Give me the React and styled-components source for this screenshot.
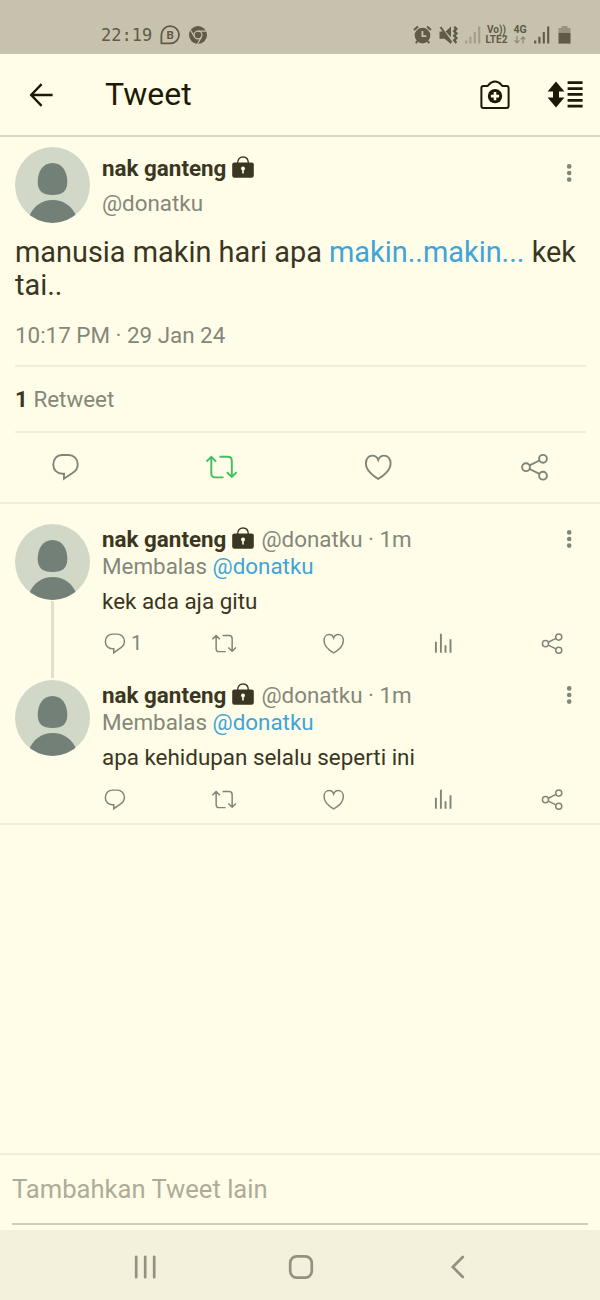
import React from "react";
import styled, { createGlobalStyle, ThemeProvider } from "styled-components";

const theme = {
  colors: {
    page: "#fffde8",
    status: "#c6c2ae",
    statusInk: "#5f5b45",
    header: "#1c1a06",
    text: "#3a3622",
    muted: "#84877a",
    icon: "#7f8577",
    link: "#40a4d9",
    green: "#41bd63",
    line: "#f0eedb",
    navBar: "#f3f0dc",
    navInk: "#959181",
  },
};

const replies = [
  { id: 1, text: "kek ada aja gitu", count: 1, thread: true },
  { id: 2, text: "apa kehidupan selalu seperti ini" },
];

const Avatar = () => (
  <AvatarSvg viewBox="0 0 75 76">
    <clipPath id="round">
      <ellipse cx="37.5" cy="38" rx="37.5" ry="38" />
    </clipPath>
    <g clipPath="url(#round)">
      <rect width="75" height="76" fill="#d1d8c7" />
      <path
        d="M37.5 16C47 16 52.3 24.5 52.3 35C52.3 44 47.5 48 37.5 48S22.7 44 22.7 35C22.7 24.5 28 16 37.5 16Z"
        fill="#738078"
      />
      <path d="M14 70C18 59 27 53 37.7 53S57.5 59 61.5 70V76H14Z" fill="#738078" />
    </g>
  </AvatarSvg>
);

const Lock = () => (
  <LockSvg viewBox="0 0 22 22">
    <path d="M5.6 7.5C5.6 3 8 1 11 1s5.4 2 5.4 6.5" fill="none" stroke="currentColor" strokeWidth="1.4" />
    <rect x="0.2" y="6.4" width="21.6" height="15.4" rx="2.2" fill="currentColor" />
    <circle cx="11" cy="12.6" r="2" fill="#fffde8" />
    <path d="M10.2 13h1.6v4.4h-1.6z" fill="#fffde8" />
  </LockSvg>
);

const More = () => (
  <MoreSvg viewBox="0 0 6 20">
    <circle cx="3.2" cy="3.4" r="2.3" />
    <circle cx="3.2" cy="10" r="2.3" />
    <circle cx="3.2" cy="16.6" r="2.3" />
  </MoreSvg>
);

const Comment = () => (
  <ActionSvg viewBox="-1 -1 32 32">
    <path d="M12.3 3h6.2c5.3 0 9.2 4 9.2 9.2 0 3.6-1.8 6.6-4.9 8.5L14 26.8V21.7H12.5C7 21.7 3.3 17.9 3.3 12.4 3.3 7 7 3 12.3 3z" />
  </ActionSvg>
);

const Retweet = () => (
  <ActionSvg viewBox="0.5 -0.4 32 32">
    <path d="M1 10.2 5.8 5.4l4.8 4.8M5.8 5.8v16.4c0 2.6 1.2 3.8 3.8 3.8H18M14 5.4h8.2c2.8 0 4.1 1.3 4.1 4.1v16M21.4 20.8l4.9 4.8 4.8-4.8" />
  </ActionSvg>
);

const Heart = () => (
  <ActionSvg viewBox="-1 -1 32 32">
    <path d="M15.2 26.9C10.8 24.5 2.9 18.6 2.9 11.2 2.9 6.6 5.9 3.6 9.4 3.6c2.6 0 4.8 1.6 5.8 4.4 1-2.8 3.2-4.4 5.8-4.4 3.6 0 6.6 3 6.6 7.6 0 7.4-7.9 13.3-12.4 15.7z" />
  </ActionSvg>
);

const Share = () => (
  <ActionSvg viewBox="-1 -1 32 32">
    <circle cx="6" cy="15.2" r="3.9" />
    <circle cx="23" cy="6.8" r="3.9" />
    <circle cx="23" cy="23.7" r="3.9" />
    <path d="m9.6 13.4 9.8-4.9M9.6 17l9.8 4.9" />
  </ActionSvg>
);

const Stats = () => (
  <ActionSvg viewBox="0.3 0.3 25 25">
    <path d="M5.2 22V11M10.2 22V3M14.8 22v-7.5M19.8 22V8.5" />
  </ActionSvg>
);

const Signal = ({ faint }) => (
  <StatusIcon viewBox="0 0 16 20" $w={16} $faint={faint}>
    <path d="M1.2 18.4v-3M5.4 18.4v-6.6M9.8 18.4V7M14.2 18.4V1.6" fill="none" stroke="currentColor" strokeWidth="2.1" />
  </StatusIcon>
);

const StatusBar = () => (
  <Status>
    <Clock>22:19</Clock>
    <StatusIcon viewBox="0 0 20 20" $w={20} $gap={8}>
      <path d="M1.4 18.4V10a8.8 8.6 0 1 1 8.8 8.4z" fill="none" stroke="currentColor" strokeWidth="1.8" />
      <text x="10.2" y="14" textAnchor="middle" fontSize="11.5" fontWeight="700" fontFamily="Roboto, sans-serif" fill="currentColor">
        B
      </text>
    </StatusIcon>
    <StatusIcon viewBox="0 0 20 20" $w={20} $gap={8}>
      <circle cx="10" cy="10" r="9" fill="currentColor" />
      <circle cx="10" cy="10" r="3.9" fill="none" stroke="#c6c2ae" strokeWidth="1.2" />
      <path d="M10 6.1h8M6.6 11.9 2.6 5.2M13.4 11.9 9.5 19" stroke="#c6c2ae" strokeWidth="1.2" />
    </StatusIcon>
    <StatusRight>
      <StatusIcon viewBox="0 0 19 20" $w={19}>
        <circle cx="9.5" cy="10.6" r="7.8" fill="currentColor" />
        <path d="m1 5 4-3.6M18 5l-4-3.6M4.4 16.2l-1.6 2M14.6 16.2l1.6 2" stroke="currentColor" strokeWidth="2" />
        <path d="M9.4 6v5.2h4" fill="none" stroke="#c6c2ae" strokeWidth="1.8" />
      </StatusIcon>
      <StatusIcon viewBox="0 0 19 20" $w={19} $gap={7}>
        <path d="M.5 6.5h3.5l8 9V19L5.5 13.8H.5zM6.6 6.6 12 1.6v10.6z" fill="currentColor" />
        <path d="M1.5 2 12.5 17.5" stroke="currentColor" strokeWidth="2" />
        <path d="m15.2 1.8 2.2 2-2.2 2.4 2.2 2.2-2.2 2.4 2.2 2.2-2.2 2.4 2.2 2.6" fill="none" stroke="currentColor" strokeWidth="2.4" />
      </StatusIcon>
      <Spacer $w={7} />
      <Signal faint />
      <Carrier>
        <span>Vo))</span>
        <span>LTE2</span>
      </Carrier>
      <Network>
        <span>4G</span>
        <svg width="12" height="8" viewBox="0 0 12 8">
          <path d="M3 0v6.5M.6 4.4 3 6.8l2.4-2.4M9 7.5V1M6.6 3.4 9 1l2.4 2.4" fill="none" stroke="#8f8b77" strokeWidth="1.3" />
        </svg>
      </Network>
      <Spacer $w={7} />
      <Signal />
      <StatusIcon viewBox="0 0 13 20" $w={13} $gap={8}>
        <path d="M3.5 1h6v2H12.5V9H.5V3h3z" fill="#97937f" />
        <path d="M.5 8h12v10.6H.5z" fill="currentColor" />
      </StatusIcon>
    </StatusRight>
  </Status>
);

const Reply = ({ text, count, thread }) => (
  <ReplyRow>
    <AvatarColumn>
      <Avatar />
      {thread && <ThreadLine />}
    </AvatarColumn>
    <ReplyBody>
      <ReplyHead>
        <Name>nak ganteng</Name>
        <Lock />
        <Muted>@donatku · 1m</Muted>
        <More />
      </ReplyHead>
      <Replying>
        Membalas <Link>@donatku</Link>
      </Replying>
      <ReplyText>{text}</ReplyText>
      <ReplyActions>
        <Action>
          <Comment />
          {count}
        </Action>
        <Action>
          <Retweet />
        </Action>
        <Action>
          <Heart />
        </Action>
        <Action>
          <Stats />
        </Action>
        <Action>
          <Share />
        </Action>
      </ReplyActions>
    </ReplyBody>
  </ReplyRow>
);

const App = () => {
  return (
    <ThemeProvider theme={theme}>
      <GlobalStyle />
      <Screen>
        <StatusBar />
        <Header>
          <BackSvg viewBox="0 0 24 24">
            <path d="M12.6 1.2 2.2 12l10.4 10.8M2.2 12h21.4" />
          </BackSvg>
          <Title>Tweet</Title>
          <CameraSvg viewBox="0 0.5 30 30">
            <path d="M3.4 6.6H7.2C8.6 6.4 9.6 2 15 2s6.4 4.4 7.8 4.6h3.8c1.4 0 2 .7 2 2v18c0 1.4-.6 2-2 2H3.4c-1.4 0-2-.6-2-2V8.6c0-1.3.6-2 2-2z" fill="none" stroke="currentColor" strokeWidth="2" />
            <circle cx="15" cy="16.6" r="7.2" fill="currentColor" />
            <path d="M15 12.5v8.2M10.9 16.6h8.2" stroke="#fffde8" strokeWidth="2.6" />
          </CameraSvg>
          <SortSvg viewBox="0 0 36 27">
            <path d="m9 .4 8.4 10H12v6.2h5.4L9 26.4.6 16.6H6v-6.2H.6z" fill="currentColor" />
            <path d="M20.6 1.7h15M20.6 7.6h15M20.6 13.4h15M20.6 19.3h15M20.6 25.2h15" stroke="currentColor" strokeWidth="2.8" />
          </SortSvg>
        </Header>
        <Tweet>
          <Author>
            <Avatar />
            <AuthorInfo>
              <NameRow>
                <Name>nak ganteng</Name>
                <Lock />
                <More />
              </NameRow>
              <Muted>@donatku</Muted>
            </AuthorInfo>
          </Author>
          <TweetText>
            manusia makin hari apa <Link>makin..makin...</Link> kek
            <br />
            tai..
          </TweetText>
          <TweetDate>10:17 PM · 29 Jan 24</TweetDate>
          <Counts>
            <b>1</b> Retweet
          </Counts>
        </Tweet>
        <TweetActions>
          <Comment />
          <Active>
            <Retweet />
          </Active>
          <Heart />
          <Share />
        </TweetActions>
        <Replies>
          {replies.map((reply) => (
            <Reply key={reply.id} {...reply} />
          ))}
        </Replies>
        <Composer>
          <Field>Tambahkan Tweet lain</Field>
        </Composer>
        <NavBar>
          <NavSvg viewBox="0 0 26 26">
            <path d="M4.2 2.8v20.4M13.2 2.8v20.4M22.2 2.8v20.4" />
          </NavSvg>
          <NavSvg viewBox="0 0 26 26">
            <rect x="2.2" y="2.4" width="21.6" height="21.2" rx="6.5" />
          </NavSvg>
          <NavSvg viewBox="0 0 26 26">
            <path d="M18.8 3 8.8 13l10 10" />
          </NavSvg>
        </NavBar>
      </Screen>
    </ThemeProvider>
  );
};

const GlobalStyle = createGlobalStyle`
  * {
    box-sizing: border-box;
  }
  body {
    margin: 0;
    background-color: #fffde8;
  }
  svg {
    display: block;
    flex-shrink: 0;
  }
`;
const Screen = styled.div`
  width: 600px;
  height: 1300px;
  display: flex;
  flex-direction: column;
  overflow: hidden;
  font-family: Roboto, sans-serif;
  font-size: 22.4px;
  line-height: 27px;
  color: ${(props) => props.theme.colors.text};
  background-color: ${(props) => props.theme.colors.page};
`;
const Status = styled.div`
  height: 54px;
  flex-shrink: 0;
  display: flex;
  align-items: center;
  padding: 15px 29px 0 101px;
  color: ${(props) => props.theme.colors.statusInk};
  background-color: ${(props) => props.theme.colors.status};
`;
const Clock = styled.span`
  font-family: "DejaVu Sans Mono", monospace;
  font-size: 17px;
  line-height: 20px;
`;
const StatusIcon = styled.svg`
  width: ${(props) => props.$w}px;
  height: 20px;
  margin-left: ${(props) => props.$gap || 0}px;
  opacity: ${(props) => (props.$faint ? 0.35 : 1)};
`;
const StatusRight = styled.div`
  margin-left: auto;
  display: flex;
  align-items: center;
`;
const Spacer = styled.span`
  width: ${(props) => props.$w}px;
`;
const Carrier = styled.div`
  width: 23px;
  margin-left: 4px;
  display: flex;
  flex-direction: column;
  align-items: center;
  font-size: 10px;
  font-weight: 700;
  line-height: 9.6px;
`;
const Network = styled.div`
  width: 14px;
  margin-left: 5px;
  display: flex;
  flex-direction: column;
  align-items: center;
  gap: 2px;
  font-size: 10.5px;
  font-weight: 700;
  line-height: 9px;
`;
const Header = styled.header`
  height: 83px;
  flex-shrink: 0;
  display: flex;
  align-items: center;
  padding: 0 17px 0 29px;
  border-bottom: 2px solid #d9d6c3;
  color: ${(props) => props.theme.colors.header};
`;
const BackSvg = styled.svg`
  width: 24px;
  height: 24px;
  fill: none;
  stroke: currentColor;
  stroke-width: 2.4;
`;
const Title = styled.h1`
  margin: 0 auto 1px 52px;
  font-size: 32px;
  font-weight: 400;
  line-height: 38px;
`;
const CameraSvg = styled.svg`
  width: 30px;
  height: 30px;
  margin-right: 37px;
`;
const SortSvg = styled.svg`
  width: 36px;
  height: 27px;
`;
const Tweet = styled.article`
  padding: 10px 14px 0 15px;
`;
const Author = styled.div`
  display: flex;
  gap: 12px;
`;
const AvatarSvg = styled.svg`
  width: 75px;
  height: 76px;
`;
const AuthorInfo = styled.div`
  flex: 1;
  padding-top: 8px;
`;
const NameRow = styled.div`
  display: flex;
  height: 35px;
`;
const Name = styled.span`
  font-weight: 700;
`;
const LockSvg = styled.svg`
  width: 22px;
  height: 22px;
  margin: 1px 7px 0 6px;
`;
const MoreSvg = styled.svg`
  width: 6px;
  height: 20px;
  margin: 8px 14px 0 auto;
  fill: ${(props) => props.theme.colors.icon};
`;
const Muted = styled.span`
  color: ${(props) => props.theme.colors.muted};
`;
const Link = styled.span`
  color: ${(props) => props.theme.colors.link};
`;
const TweetText = styled.p`
  margin: 13px 0 0;
  font-size: 28.9px;
  line-height: 33px;
`;
const TweetDate = styled.div`
  height: 65px;
  padding-top: 20px;
  border-bottom: 2px solid ${(props) => props.theme.colors.line};
  color: ${(props) => props.theme.colors.muted};
`;
const Counts = styled.div`
  height: 66px;
  padding-top: 19px;
  border-bottom: 2px solid ${(props) => props.theme.colors.line};
  color: ${(props) => props.theme.colors.muted};
  & b {
    color: ${(props) => props.theme.colors.text};
  }
`;
const ActionSvg = styled.svg`
  width: 32px;
  height: 32px;
  fill: none;
  stroke: currentColor;
  stroke-width: 1.9;
`;
const TweetActions = styled.div`
  height: 71px;
  flex-shrink: 0;
  display: flex;
  justify-content: space-between;
  align-items: center;
  padding: 0 49px 2px;
  border-bottom: 2px solid ${(props) => props.theme.colors.line};
  color: ${(props) => props.theme.colors.icon};
`;
const Active = styled.span`
  color: ${(props) => props.theme.colors.green};
`;
const Replies = styled.section`
  padding-top: 20px;
  border-bottom: 2px solid ${(props) => props.theme.colors.line};
`;
const ReplyRow = styled.article`
  display: flex;
  gap: 12px;
  height: 156px;
  padding: 0 14px 0 15px;
  &:last-child {
    height: 143px;
  }
`;
const AvatarColumn = styled.div`
  display: flex;
  flex-direction: column;
  align-items: center;
`;
const ThreadLine = styled.div`
  flex: 1;
  width: 3px;
  margin: 1px 0 2px;
  background-color: #e2dfcb;
`;
const ReplyBody = styled.div`
  flex: 1;
  padding-top: 2px;
`;
const ReplyHead = styled.div`
  display: flex;
  height: 27px;
  & ${MoreSvg} {
    margin-top: 3px;
  }
`;
const Replying = styled.div`
  color: ${(props) => props.theme.colors.muted};
`;
const ReplyText = styled.p`
  margin: 8px 0 0;
`;
const ReplyActions = styled.div`
  display: grid;
  grid-template-columns: repeat(4, 109.5px) 25px;
  margin-top: 16px;
  color: ${(props) => props.theme.colors.icon};
`;
const Action = styled.div`
  display: flex;
  align-items: center;
  gap: 4px;
  height: 25px;
  font-size: 20px;
  line-height: 25px;
  & svg {
    width: 25px;
    height: 25px;
  }
`;
const Composer = styled.div`
  height: 77px;
  margin-top: auto;
  flex-shrink: 0;
  padding: 0 12px;
  border-top: 2px solid ${(props) => props.theme.colors.line};
`;
const Field = styled.div`
  height: 70px;
  padding-top: 18px;
  border-bottom: 2px solid #cfccb9;
  font-size: 25.6px;
  line-height: 32px;
  color: #aeac98;
`;
const NavBar = styled.nav`
  height: 70px;
  flex-shrink: 0;
  display: flex;
  justify-content: space-between;
  align-items: center;
  padding: 4px 130px 0 132px;
  background-color: ${(props) => props.theme.colors.navBar};
`;
const NavSvg = styled.svg`
  width: 26px;
  height: 26px;
  fill: none;
  stroke: ${(props) => props.theme.colors.navInk};
  stroke-width: 2.7;
  stroke-linecap: round;
`;
export default App;
